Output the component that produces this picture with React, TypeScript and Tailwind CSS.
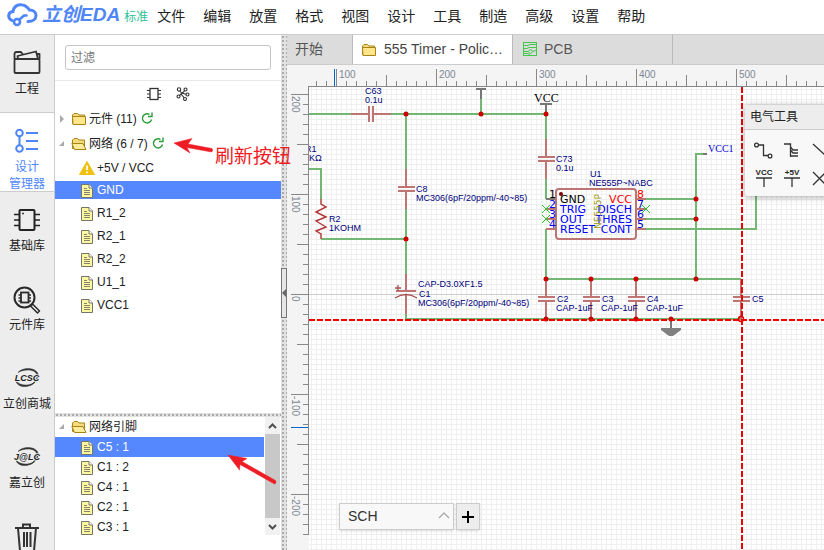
import React, { useState } from "react";

const MENUS = ["文件", "编辑", "放置", "格式", "视图", "设计", "工具", "制造", "高级", "设置", "帮助"];
const NETS = ["GND", "R1_2", "R2_1", "R2_2", "U1_1", "VCC1"];
const PINS = ["C5 : 1", "C1 : 2", "C4 : 1", "C2 : 1", "C3 : 1"];

function Logo() {
  return (
    <div className="flex items-center pb-[2px] text-[#4f86f7]">
      <svg width="32" height="24" viewBox="0 0 32 24" fill="none" stroke="currentColor" strokeWidth="3" strokeLinecap="round">
        <path d="M5 17.500 C0 15 1 9 6 8.500 C7 3 11 1.500 14.500 1.800 C19 2 21 5 22.500 7 C27 7 29 10 29 12.500 C29 16 26 18.500 21 18.500" />
        <circle cx="10" cy="19" r="3" strokeWidth="2.600" />
        <path d="M12.500 16.500 L17 12.500 H19.500" strokeWidth="2.600" />
      </svg>
      <span className="ml-[3px] flex items-center italic leading-6">
        <span className="text-[19px] font-bold">立创</span>
        <span className="text-[19px] font-bold">EDA</span>
      </span>
    </div>
  );
}

function ProjectIcon() {
  return (
    <svg width="28" height="26" viewBox="0 0 28 26" fill="none" stroke="#333" strokeWidth="1.800" strokeLinejoin="round">
      <path d="M1.500 9 V4 Q1.500 2 3.500 2 H8 L10 4.500" />
      <path d="M5 9 L4.500 6 L23 1.500 L25 9" />
      <path d="M23.500 4 H26.500 V9" />
      <rect x="1.500" y="9" width="25" height="14" rx="1" />
    </svg>
  );
}

function ManagerIcon() {
  return (
    <svg width="28" height="26" viewBox="0 0 28 26" fill="none" stroke="#4f86f7" strokeWidth="2">
      <circle cx="6.500" cy="5" r="3.300" />
      <circle cx="6.500" cy="20.500" r="3.300" />
      <path d="M6.500 8.500 V17 M13 5 H25 M13 13 H25 M13 21 H25" />
    </svg>
  );
}

function ChipIcon() {
  return (
    <svg width="28" height="26" viewBox="0 0 28 26" fill="none" stroke="#222" strokeWidth="2">
      <rect x="6.500" y="3" width="15" height="20" rx="1" />
      <path d="M1 7.500 H6 M1 13 H6 M1 18.500 H6 M22 7.500 H27 M22 13 H27 M22 18.500 H27" strokeWidth="1.700" />
      <circle cx="10" cy="6.500" r="0.900" fill="#222" stroke="none" />
    </svg>
  );
}

function LibraryIcon() {
  return (
    <svg width="28" height="28" viewBox="0 0 28 28" fill="none" stroke="#2b2b2b" strokeWidth="2">
      <circle cx="11.500" cy="11.500" r="10" />
      <rect x="8" y="6.500" width="7.500" height="10" strokeWidth="1.800" />
      <path d="M5.500 9 H8 M5.500 12 H8 M5.500 15 H8 M15.500 9 H18 M15.500 12 H18 M15.500 15 H18" strokeWidth="1.300" />
      <path d="M19.500 18 L26.500 25 L24.500 27 L17.500 20 Z" strokeWidth="1.500" strokeLinejoin="round" />
    </svg>
  );
}

function BrandIcon({ name }: { name: string }) {
  return (
    <svg width="28" height="26" viewBox="0 0 28 26" fill="none" stroke="#333">
      <path d="M5 7.500 C9 2.500 20 2 24 7 C27 11 25 17 17 20.500 C24 15.500 26 11 22 7 C18 4 10 4.500 5 7.500 Z" fill="#333" strokeWidth="0.500" />
      <path d="M3 16 C4 22 14 24 21 18 C15 21 7 21 3 16 Z" fill="#333" strokeWidth="0.500" />
      <text x="14" y="16" textAnchor="middle" stroke="#ededed" strokeWidth="1.500" paintOrder="stroke" fill="#222" className="font-['Liberation_Sans',sans-serif] text-[9px] font-bold italic">
        {name}
      </text>
    </svg>
  );
}

function TrashIcon() {
  return (
    <svg width="28" height="30" viewBox="0 0 28 30" fill="none" stroke="#333" strokeWidth="2">
      <path d="M2 5 H26 M10 5 V1.500 H17 V5 M5 5 L7 28 H21 L23 5 M11 9 V24 M14 9 V24 M17.500 9 V24" />
    </svg>
  );
}

const SIDE = [
  { key: "project", label: ["工程"], icon: <ProjectIcon />, box: "h-[77px]" },
  { key: "manager", label: ["设计", "管理器"], icon: <ManagerIcon />, box: "h-[80px] border-y border-[#ccc] bg-white text-[#4f86f7]" },
  { key: "base", label: ["基础库"], icon: <ChipIcon />, box: "h-[79px]" },
  { key: "lib", label: ["元件库"], icon: <LibraryIcon />, box: "h-[79px]" },
  { key: "lcsc", label: ["立创商城"], icon: <BrandIcon name="LCSC" />, box: "h-[79px]" },
  { key: "jlc", label: ["嘉立创"], icon: <BrandIcon name="J@LC" />, box: "h-[79px]" },
  { key: "trash", label: [], icon: <TrashIcon />, box: "h-[79px]" },
];

function Sidebar() {
  return (
    <nav className="flex w-[55px] shrink-0 flex-col overflow-hidden border-r border-[#ccc] bg-[#ededed] text-[#222]">
      {SIDE.map((s) => (
        <button key={s.key} className={`flex shrink-0 flex-col items-center gap-[5px] pt-[15px] text-[12px] leading-[17px] ${s.box}`}>
          <span className="flex h-[26px] items-start">{s.icon}</span>
          <span className="block whitespace-nowrap">
            {s.label.map((l) => (
              <span key={l} className="block">{l}</span>
            ))}
          </span>
        </button>
      ))}
    </nav>
  );
}

function Folder({ open = false }: { open?: boolean }) {
  return (
    <svg width="16" height="14" viewBox="0 0 16 14" className="shrink-0" stroke="#a88418" strokeLinejoin="round">
      <path d="M1.500 11.500 V3 L3 1.500 H6.500 L8 3 H13.500 V11.500 Z" fill="#f5dc7a" />
      {open ? <path d="M3.500 12.500 L0.800 6.500 H12 L15 12.500 Z" fill="#ffec9a" /> : <path d="M1.500 4.500 H14.500 V12.500 H2 Z" fill="#ffe68c" />}
    </svg>
  );
}

function FileIcon() {
  return (
    <svg width="12" height="15" viewBox="0 0 12 15" className="shrink-0" stroke="#77746a">
      <path d="M0.500 1.500 H8 L11.500 5 V14.500 H0.500 Z" fill="#fdf7a0" />
      <path d="M8 1.500 V5 H11.500" fill="#fff" />
      <path d="M3 5.500 H6 M3 7.500 H9 M3 9.500 H9 M3 11.500 H9" strokeWidth="0.900" />
    </svg>
  );
}

function Refresh() {
  return (
    <button aria-label="刷新" className="shrink-0">
      <svg width="12" height="13" viewBox="0 0 12 13" fill="none" stroke="#2a9d3a" strokeWidth="1.400">
        <path d="M8.500 2.500 A4.600 4.600 0 1 0 10.500 7.500" />
        <path d="M7 4.500 H11 V0.500" />
      </svg>
    </button>
  );
}

function Caret({ open = false }: { open?: boolean }) {
  return (
    <svg width="8" height="8" viewBox="0 0 8 8" className="shrink-0" fill="#aaa">
      {open ? <path d="M6 1 V6 H1 Z" /> : <path d="M2 0 L6 4 L2 8 Z" />}
    </svg>
  );
}

function NetPanel() {
  const [net, setNet] = useState("GND");
  const [pin, setPin] = useState("C5 : 1");
  return (
    <aside className="flex w-[226px] shrink-0 flex-col bg-white text-[12px] text-[#222]">
      <div className="border-b border-[#e8e8e8] px-[10px] py-[10px]">
        <input aria-label="过滤" placeholder="过滤" className="block h-[25px] w-full rounded-[3px] border border-[#c4c4c4] px-[5px] text-[12px] outline-none placeholder:text-[#757575]" />
      </div>
      <div className="flex h-[25px] items-center justify-center gap-[15px]">
        <button aria-label="元件">
          <svg width="14" height="14" viewBox="0 0 14 14" fill="none" stroke="#333">
            <rect x="3" y="1.500" width="8" height="11" strokeWidth="1.300" />
            <path d="M0 3.500 H3 M0 7 H3 M0 10.500 H3 M11 3.500 H14 M11 7 H14 M11 10.500 H14" />
          </svg>
        </button>
        <button aria-label="网络">
          <svg width="14" height="14" viewBox="0 0 14 14" fill="none" stroke="#333" strokeWidth="1.100">
            <circle cx="3" cy="2.500" r="1.700" />
            <circle cx="9.500" cy="2.500" r="1.500" />
            <circle cx="2.500" cy="9.500" r="1.500" />
            <circle cx="9" cy="12" r="1.500" />
            <circle cx="11.500" cy="7.500" r="1.500" />
            <path d="M4 4 L5.500 6 L10 7.200 M8.500 4 L3.500 8.500 M5 7 L8 10.700" />
          </svg>
        </button>
      </div>
      <div className="min-h-0 flex-1 overflow-hidden">
        <div className="flex h-[25px] items-center pl-[3px]">
          <Caret />
          <span className="ml-[5px]"><Folder /></span>
          <span className="ml-[2px] mr-1">元件 (11)</span>
          <Refresh />
        </div>
        <div className="flex h-[25px] items-center pl-[3px]">
          <Caret open />
          <span className="ml-[5px]"><Folder open /></span>
          <span className="ml-[2px] mr-1">网络 (6 / 7)</span>
          <Refresh />
        </div>
        <button className="flex h-[23px] w-full items-center gap-[2px] pl-6">
          <svg width="16" height="14" viewBox="0 0 16 14">
            <path d="M8 0.500 L15.500 13.500 H0.500 Z" fill="#f0c010" stroke="#f0c010" strokeLinejoin="round" />
            <path d="M8 4.500 V9 M8 10.500 V12.200" stroke="#fff" strokeWidth="1.700" />
          </svg>
          +5V / VCC
        </button>
        <div className="flex flex-col gap-[5px] pt-[2px]">
          {NETS.map((n) => (
            <button
              key={n}
              onClick={() => setNet(n)}
              className={`flex h-[18px] w-full items-center gap-1 pl-[26px] leading-[18px] ${n === net ? "bg-[#5588ff] text-white" : ""}`}
            >
              <FileIcon />
              {n}
            </button>
          ))}
        </div>
      </div>
      <div className="h-1 shrink-0 bg-[#e2e2e2] bg-[radial-gradient(#aaa_1px,transparent_1px)] bg-[size:4px_4px]" />
      <div className="h-[133px] shrink-0">
        <div className="flex h-[118px]">
          <div className="min-w-0 flex-1">
            <div className="flex h-5 items-center pl-[3px]">
              <Caret open />
              <span className="ml-[5px]"><Folder open /></span>
              <span className="ml-[2px]">网络引脚</span>
            </div>
            {PINS.map((p) => (
              <button
                key={p}
                onClick={() => setPin(p)}
                className={`flex h-5 w-full items-center gap-1 pl-[26px] leading-[18px] ${p === pin ? "bg-[#5588ff] text-white" : ""}`}
              >
                <FileIcon />
                {p}
              </button>
            ))}
          </div>
          <div className="mx-px flex w-[15px] flex-col items-center bg-[#f1f1f1]">
            <svg width="15" height="17" viewBox="0 0 15 17" fill="none" stroke="#505050" strokeWidth="2"><path d="M4 11 L7.500 7.500 L11 11" /></svg>
            <div className="w-full flex-1 bg-[#c8c8c8]" />
            <svg width="15" height="17" viewBox="0 0 15 17" fill="none" stroke="#505050" strokeWidth="2"><path d="M4 7 L7.500 10.500 L11 7" /></svg>
          </div>
        </div>
      </div>
    </aside>
  );
}

function Splitter() {
  return (
    <div className="flex w-[6px] shrink-0 flex-col bg-[#e2e2e2] bg-[radial-gradient(#aaa_1px,transparent_1px)] bg-[size:4px_4px] pt-[233px]">
      <button aria-label="收起" className="flex h-[50px] w-[6px] items-center border border-[#777] bg-[#e6e6e6]">
        <svg width="4" height="8" viewBox="0 0 4 8" fill="#666"><path d="M4 0 V8 L0 4 Z" /></svg>
      </button>
    </div>
  );
}

function Tabs() {
  return (
    <div className="flex h-[30px] shrink-0 border-b border-[#ccc] bg-[#dcdcdc] text-[14px] text-[#555]">
      <button className="w-[66px] border-r border-[#bbb] pl-2 text-left">开始</button>
      <button className="flex w-[160px] items-center gap-[7px] border-r border-[#bbb] bg-white pl-2 text-[#444]">
        <Folder />
        <span className="truncate">555 Timer - Polic…</span>
      </button>
      <button className="flex w-[160px] items-center gap-[6px] border-r border-[#bbb] pl-[10px]">
        <svg width="15" height="15" viewBox="0 0 15 15" fill="none" stroke="#44c84c">
          <rect x="0.500" y="0.500" width="13" height="13" />
          <path d="M1 3.500 H5 L7 2.500 H13 M1 6.500 H4 L6 5.500 H13 M1 9.500 H5 M9.500 9.500 L13 8.500 M1 11.500 H5 L7 13" />
          <circle cx="7.500" cy="9.500" r="1.800" />
        </svg>
        PCB
      </button>
    </div>
  );
}

const range = (n: number) => Array.from({ length: n }, (_, i) => i);

function TopRuler() {
  return (
    <svg className="h-[22px] w-full shrink-0 bg-[#f4f4f4]" shapeRendering="crispEdges">
      <g transform="translate(-287 -65)">
        <rect x="308" y="86" width="4000" height="1" fill="#888" />
        {range(200).map((i) => {
          const kind = (i + 8) % 10;
          const h = kind === 0 ? 17 : kind === 5 ? 11 : 5;
          return <rect key={i} x={316 + i * 10} y={86 - h} width="1" height={h} fill="#888" />;
        })}
        {range(5).map((i) => (
          <text key={i} x={339 + i * 100} y="78" fill="#7d8793" className="text-[10px]">{100 + i * 100}</text>
        ))}
        <rect x="334" y="69" width="1" height="17" fill="#0066cc" />
      </g>
    </svg>
  );
}

function LeftRuler() {
  return (
    <svg className="h-full w-[22px] shrink-0 bg-[#f4f4f4]" shapeRendering="crispEdges">
      <g transform="translate(-287 -87)">
        <rect x="308" y="86" width="1" height="449" fill="#888" />
        {range(45).map((i) => {
          const w = i % 10 === 0 ? 17 : i % 10 === 5 ? 11 : 5;
          return <rect key={i} x={308 - w} y={94 + i * 10} width={w} height="1" fill="#888" />;
        })}
        {[200, 100, 0, -100, -200].map((v, i) => (
          <text key={v} transform={`translate(292 ${96 + i * 100}) rotate(90)`} fill="#7d8793" className="text-[10px]">{v}</text>
        ))}
        <rect x="291" y="427" width="17" height="1" fill="#0066cc" />
      </g>
    </svg>
  );
}

const WIRE = "#72b872";
const PART = "#bf7474";
const NAVY = "#000080";

function CapV({ x, y }: { x: number; y: number }) {
  return (
    <path d={`M${x} ${y - 20} V${y - 2} M${x} ${y + 2} V${y + 20} M${x - 8} ${y - 2} H${x + 9} M${x - 8} ${y + 2} H${x + 9}`} stroke={PART} strokeWidth="2" />
  );
}

const LABELS: [number, number, string][] = [
  [365, 94, "C63"], [365, 103, "0.1u"],
  [305, 152, "R1"], [304, 161, "1KΩ"],
  [416, 192, "C8"], [416, 201, "MC306(6pF/20ppm/-40~85)"],
  [329, 222, "R2"], [329, 231, "1KOHM"],
  [556, 162, "C73"], [556, 171, "0.1u"],
  [590, 177, "U1"], [589, 186, "NE555P~NABC"],
  [418, 287, "CAP-D3.0XF1.5"], [419, 297, "C1"], [418, 306, "MC306(6pF/20ppm/-40~85)"],
  [557, 302, "C2"], [556, 311, "CAP-1uF"],
  [602, 302, "C3"], [601, 311, "CAP-1uF"],
  [647, 302, "C4"], [646, 311, "CAP-1uF"],
  [752, 302, "C5"],
];
const NODES = [[406, 114], [481, 114], [546, 114], [406, 239], [696, 199], [696, 219], [696, 279], [546, 279], [591, 279], [636, 279], [546, 319], [591, 319], [636, 319], [671, 319]];
const PIN_ROWS = [
  { y: 199, l: "GND", r: "VCC", a: "1", b: "8" },
  { y: 209, l: "TRIG", r: "DISCH", a: "2", b: "7" },
  { y: 219, l: "OUT", r: "THRES", a: "3", b: "6" },
  { y: 229, l: "RESET", r: "CONT", a: "4", b: "5" },
];

function Schematic() {
  return (
    <svg className="h-full w-full" fill="none">
      <defs>
        <pattern id="grid" width="5" height="5" x="1" y="4" patternUnits="userSpaceOnUse">
          <path d="M0.500 0 V5 M0 0.500 H5" stroke="#efefef" />
        </pattern>
      </defs>
      <g transform="translate(-309 -87)">
        <rect x="309" y="87" width="4000" height="3000" fill="url(#grid)" />
        <path d="M309 294.500 H4000" stroke="#ccc" />
        <g stroke={WIRE} strokeWidth="2">
          <path d="M309 114 H351 M391 114 H546 V139 M481 99 V114 M406 114 V169 M406 209 V274 M406 314 V319 H741" />
          <path d="M309 169 H321 V199 M321 239 H406 M546 179 V199 M546 229 V279 H741" />
          <path d="M646 199 H696 M646 219 H696 M646 229 H756 V150 M703 154 H696 V279" />
        </g>
        <g stroke="#777" strokeWidth="2">
          <path d="M476 89 H486 M481 89 V99 M540 104 H552 M546 104 V114 M546 199 H556 M703 154 H707 M671 319 V329" />
        </g>
        <path d="M661 328 H681 V330 L673 336 H669 L661 330 Z" fill="#808080" />
        <path d="M351 114 H369 M373 114 H391 M369 106 V122 M373 106 V122" stroke={PART} strokeWidth="2" />
        <CapV x={406} y={189} />
        <CapV x={546} y={159} />
        <CapV x={546} y={299} />
        <CapV x={591} y={299} />
        <CapV x={636} y={299} />
        <CapV x={741} y={299} />
        <path d="M406 274 V291 M406 295 V314 M396 291 H416" stroke={PART} strokeWidth="2" />
        <path d="M395 298 Q406 291 417 298 M395 288 H401 M398 285 V291" stroke="#a85050" strokeWidth="1.300" />
        <path d="M321 199 V204 L326 207 L316 212 L326 217 L316 221 L326 227 L316 231 L321 234 V239" stroke="#b03535" strokeWidth="1.400" />
        <rect x="556" y="189" width="80" height="50" rx="3" stroke={PART} strokeWidth="2" />
        <path d="M546 209 H556 M546 219 H556 M546 229 H556 M636 199 H646 M636 209 H646 M636 219 H646 M636 229 H646" stroke={PART} strokeWidth="2" />
        <circle cx="561" cy="194" r="2" fill="#800000" />
        <path d="M542 205 L550 213 M550 205 L542 213 M542 215 L550 223 M550 215 L542 223 M642 205 L650 213 M650 205 L642 213" stroke="#22cc22" />
        <g className="text-[9px]" fill={NAVY}>
          {LABELS.map(([x, y, t], i) => (
            <text key={i} x={x} y={y}>{t}</text>
          ))}
        </g>
        <g className="font-['DejaVu_Sans',sans-serif] text-[11px]">
          {PIN_ROWS.map((p, i) => (
            <g key={p.l} fill={i === 0 ? "#000" : "#0000ff"}>
              <text x="560" y={p.y + 4}>{p.l}</text>
              <text x="632" y={p.y + 4} textAnchor="end" fill={i === 0 ? "#f00" : "#0000ff"}>{p.r}</text>
              <text x="556" y={p.y - 1} textAnchor="end">{p.a}</text>
              <text x="637" y={p.y - 1} fill={i === 0 ? "#f00" : "#0000cc"}>{p.b}</text>
            </g>
          ))}
          <text transform="translate(601 229) rotate(-90)" fill="#999900" className="text-[9px]">NE555P</text>
        </g>
        <text x="534" y="102" fill="#000" className="font-['Liberation_Serif',serif] text-[12px]">VCC</text>
        <text x="708" y="152" fill="#0000dd" className="font-['Liberation_Serif',serif] text-[10px]">VCC1</text>
        {NODES.map(([x, y]) => (
          <circle key={`${x}-${y}`} cx={x} cy={y} r="2.500" fill="#cc0000" />
        ))}
        <circle cx="741" cy="319" r="2.500" stroke="#dd0000" strokeWidth="1.500" />
        <path d="M309 320 H4000" stroke="#f00000" strokeWidth="2" strokeDasharray="6 2" />
        <path d="M742 87 V3000" stroke="#f00000" strokeWidth="2" strokeDasharray="6 2" />
      </g>
    </svg>
  );
}

function ToolsPanel() {
  return (
    <section className="absolute left-[436px] top-[18px] w-[150px] overflow-hidden rounded-[3px] bg-[#f8f8f8] shadow-[0_1px_6px_rgba(0,0,0,0.35)]">
      <h2 className="h-[25px] border-b border-[#ccc] bg-[#ededed] pl-[5px] text-[12px] leading-6 text-[#222]">电气工具</h2>
      <div className="grid h-[66px] grid-cols-[28px_28px_28px] gap-y-[2px] pl-[5px] pt-[5px]">
        <button aria-label="导线">
          <svg width="28" height="28" viewBox="0 0 28 28" fill="none" stroke="#333" strokeWidth="1.300">
            <circle cx="6.500" cy="9" r="1.900" /><path d="M8.500 9 H13.500 V19.500 H18" /><circle cx="20" cy="20" r="1.900" />
          </svg>
        </button>
        <button aria-label="总线">
          <svg width="28" height="28" viewBox="0 0 28 28" fill="none" stroke="#333" strokeWidth="1.300">
            <path d="M6 8 H12.500 V21 M12.500 11 L15 14 H20 M12.500 14 L15 17 H20 M12.500 20 H20" />
          </svg>
        </button>
        <button aria-label="总线分支">
          <svg width="28" height="28" viewBox="0 0 28 28" fill="none" stroke="#333" strokeWidth="1.300"><path d="M7 8 L20 20" /></svg>
        </button>
        <button aria-label="VCC">
          <svg width="28" height="28" viewBox="0 0 28 28" fill="none" stroke="#333" strokeWidth="1.300">
            <path d="M6 11 H22 M14 11 V20" />
            <text x="14" y="8" textAnchor="middle" fill="#222" stroke="none" className="text-[8px] font-bold">VCC</text>
          </svg>
        </button>
        <button aria-label="+5V">
          <svg width="28" height="28" viewBox="0 0 28 28" fill="none" stroke="#333" strokeWidth="1.300">
            <path d="M6 11 H22 M14 11 V20" />
            <text x="14" y="8" textAnchor="middle" fill="#222" stroke="none" className="text-[8px] font-bold">+5V</text>
          </svg>
        </button>
        <button aria-label="非连接标志">
          <svg width="28" height="28" viewBox="0 0 28 28" fill="none" stroke="#333" strokeWidth="1.300"><path d="M7 5 L20 18 M20 5 L7 18" /></svg>
        </button>
      </div>
    </section>
  );
}

function SheetBar() {
  return (
    <div className="absolute bottom-[20px] left-[30px] flex gap-[2px]">
      <div className="relative">
        <select aria-label="图页" className="h-[27px] w-[115px] appearance-none border border-[#ccc] bg-[#f8f8f8] pl-2 text-[14px] text-[#333] shadow-sm">
          <option>SCH</option>
        </select>
        <svg className="pointer-events-none absolute right-1 top-2 h-2 w-3" viewBox="0 0 12 8" fill="none" stroke="#aaa" strokeWidth="1.400"><path d="M1 7 L6 2 L11 7" /></svg>
      </div>
      <button aria-label="新建图页" className="flex h-[27px] w-[24px] items-center justify-center border border-[#ccc] bg-[#ededed] shadow-sm">
        <svg width="12" height="12" viewBox="0 0 12 12" stroke="#000" strokeWidth="2"><path d="M0 6 H12 M6 0 V12" /></svg>
      </button>
    </div>
  );
}

function Annotations() {
  return (
    <div className="pointer-events-none absolute inset-0">
      <svg className="h-full w-full" fill="#ee1c24" stroke="#ee1c24">
        <path d="M174 143 L192 138.500 L188 144 L212 148.500 Q213.500 150.500 211.500 152 L187 147.500 L190 153 Z" strokeWidth="0.500" />
        <path d="M228 455 L247 458.500 L242 461.500 L275.500 480.500 Q277 483 274.500 484 L240 464.500 L239.500 470 Z" strokeWidth="0.500" />
      </svg>
      <span className="absolute left-[215px] top-[145px] text-[19px] leading-6 text-[#ee1c24]">刷新按钮</span>
    </div>
  );
}

export default function App() {
  return (
    <div className="relative flex h-screen flex-col overflow-hidden bg-white font-['Liberation_Sans','Noto_Sans_CJK_SC',sans-serif]">
      <header className="flex h-[35px] shrink-0 items-center border-b border-[#ccc] pb-[2px] pl-[7px]">
        <Logo />
        <span className="ml-1 pt-[2px] text-[12px] text-[#2dbf9b]">标准</span>
        <div className="ml-[9px] flex gap-[18px] text-[14px] text-[#222]">
          {MENUS.map((m) => (
            <button key={m} className="whitespace-nowrap">{m}</button>
          ))}
        </div>
      </header>
      <div className="flex min-h-0 flex-1">
        <Sidebar />
        <NetPanel />
        <Splitter />
        <main className="flex min-w-0 flex-1 flex-col">
          <Tabs />
          <TopRuler />
          <div className="flex min-h-0 flex-1">
            <LeftRuler />
            <div className="relative min-w-0 flex-1 overflow-hidden">
              <Schematic />
              <ToolsPanel />
              <SheetBar />
            </div>
          </div>
        </main>
      </div>
      <Annotations />
    </div>
  );
}
